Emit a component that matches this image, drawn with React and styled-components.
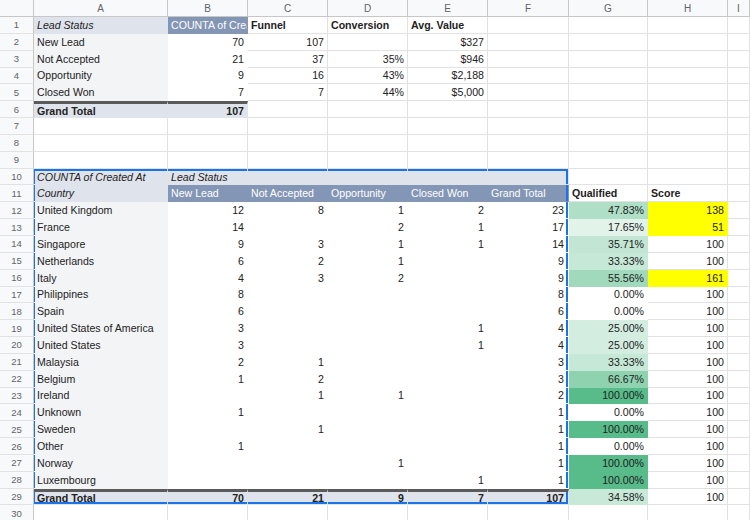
import React from 'react';
import styled, {createGlobalStyle} from 'styled-components';

const Global = createGlobalStyle`
  body { margin: 0; background: #fff; font-family: "Liberation Sans", Arial, sans-serif; }
`;

const COLS = [34, 134, 80, 80, 80, 80, 81, 79, 80, 22];
const ROW_H = 16.85;

const Sheet = styled.div`
  display: grid;
  grid-template-columns: ${COLS.map(c => c + 'px').join(' ')};
  grid-template-rows: 17px;
  grid-auto-rows: ${ROW_H}px;
  width: 750px;
  height: 520px;
  overflow: hidden;
  font-size: 10.6px;
  color: #222;
`;

const ColHead = styled.div`
  background: #f8f9fa;
  border-right: 1px solid #c7c7c7;
  border-bottom: 1px solid #c7c7c7;
  color: #5f6368;
  font-size: 10px;
  display: flex;
  align-items: center;
  justify-content: center;
`;

const RowHead = styled.div`
  background: #f8f9fa;
  border-right: 1px solid #c7c7c7;
  border-bottom: 1px solid #e2e2e2;
  color: #5f6368;
  font-size: 9.5px;
  display: flex;
  align-items: center;
  justify-content: center;
`;

const Cell = styled.div`
  position: relative;
  background: ${p => p.$bg || '#fff'};
  color: ${p => p.$color || '#222'};
  font-weight: ${p => (p.$bold ? 700 : 400)};
  font-style: ${p => (p.$italic ? 'italic' : 'normal')};
  display: flex;
  align-items: center;
  justify-content: ${p => (p.$right ? 'flex-end' : 'flex-start')};
  padding: 0 ${p => (p.$edge ? 4 : 3)}px 0 3px;
  white-space: nowrap;
  overflow: ${p => (p.$clip ? 'hidden' : 'visible')};
  border-right: 1px solid ${p => (p.$grid ? '#e2e2e2' : 'transparent')};
  border-bottom: 1px solid ${p => (p.$grid ? '#e2e2e2' : 'transparent')};
  border-top: ${p => (p.$thick ? '3px solid #5a5a5a' : 'none')};
  box-shadow: ${p => p.$sel || 'none'};
  z-index: ${p => (p.$clip ? 2 : 1)};
`;

const LIGHT = '#dfe3eb';
const DARK = '#8496b5';
const SIDE = '#f3f4f6';
const Y = '#ffff00';

const countries = [
  ['United Kingdom', 12, 8, 1, 2, 23, '47.83%', '#afdfc6', 138, Y],
  ['France', 14, '', 2, 1, 17, '17.65%', '#e2f3ea', 51, Y],
  ['Singapore', 9, 3, 1, 1, 14, '35.71%', '#c2e6d3', 100],
  ['Netherlands', 6, 2, 1, '', 9, '33.33%', '#c6e8d6', 100],
  ['Italy', 4, 3, 2, '', 9, '55.56%', '#a1d9bc', 161, Y],
  ['Philippines', 8, '', '', '', 8, '0.00%', '#fff', 100],
  ['Spain', 6, '', '', '', 6, '0.00%', '#fff', 100],
  ['United States of America', 3, '', '', 1, 4, '25.00%', '#d3eee0', 100],
  ['United States', 3, '', '', 1, 4, '25.00%', '#d3eee0', 100],
  ['Malaysia', 2, 1, '', '', 3, '33.33%', '#c6e8d6', 100],
  ['Belgium', 1, 2, '', '', 3, '66.67%', '#8fd2af', 100],
  ['Ireland', '', 1, 1, '', 2, '100.00%', '#57bb8a', 100],
  ['Unknown', 1, '', '', '', 1, '0.00%', '#fff', 100],
  ['Sweden', '', 1, '', '', 1, '100.00%', '#57bb8a', 100],
  ['Other', 1, '', '', '', 1, '0.00%', '#fff', 100],
  ['Norway', '', '', 1, '', 1, '100.00%', '#57bb8a', 100],
  ['Luxembourg', '', '', '', 1, 1, '100.00%', '#57bb8a', 100],
];

function buildRows() {
  const rows = [];
  for (let i = 0; i < 30; i++) rows.push(Array.from({length: 9}, () => ({grid: true})));
  const set = (r, c, v) => { rows[r - 1][c] = {...v}; };
  const pv = (o) => ({grid: false, ...o});

  // top pivot
  set(1, 0, pv({t: 'Lead Status', italic: true, bg: LIGHT}));
  set(1, 1, pv({t: 'COUNTA of Created At', bg: DARK, color: '#fff', clip: true}));
  set(1, 2, {t: 'Funnel', bold: true, grid: true});
  set(1, 3, {t: 'Conversion', bold: true, grid: true});
  set(1, 4, {t: 'Avg. Value', bold: true, grid: true});
  const top = [
    ['New Lead', 70, 107, '', '$327'],
    ['Not Accepted', 21, 37, '35%', '$946'],
    ['Opportunity', 9, 16, '43%', '$2,188'],
    ['Closed Won', 7, 7, '44%', '$5,000'],
  ];
  top.forEach((r, i) => {
    set(i + 2, 0, pv({t: r[0], bg: SIDE}));
    set(i + 2, 1, pv({t: r[1], right: true}));
    set(i + 2, 2, {t: r[2], right: true, grid: true});
    set(i + 2, 3, {t: r[3], right: true, grid: true});
    set(i + 2, 4, {t: r[4], right: true, grid: true});
  });
  set(6, 0, pv({t: 'Grand Total', bold: true, bg: LIGHT, thick: true}));
  set(6, 1, pv({t: 107, bold: true, bg: LIGHT, thick: true, right: true}));

  // big pivot
  const heads = ['New Lead', 'Not Accepted', 'Opportunity', 'Closed Won', 'Grand Total'];
  set(10, 0, pv({t: 'COUNTA of Created At', italic: true, bg: LIGHT}));
  set(10, 1, pv({t: 'Lead Status', italic: true, bg: LIGHT}));
  for (let c = 2; c <= 5; c++) set(10, c, pv({bg: LIGHT}));
  set(11, 0, pv({t: 'Country', italic: true, bg: LIGHT}));
  heads.forEach((h, i) => set(11, i + 1, pv({t: h, bg: DARK, color: '#fff'})));
  set(11, 6, {t: 'Qualified', bold: true, grid: true});
  set(11, 7, {t: 'Score', bold: true, grid: true});

  countries.forEach((r, i) => {
    const row = i + 12;
    set(row, 0, pv({t: r[0], bg: SIDE}));
    for (let c = 1; c <= 5; c++) set(row, c, pv({t: r[c], right: true}));
    set(row, 6, {t: r[6], right: true, bg: r[7]});
    set(row, 7, {t: r[8], right: true, bg: r[9], grid: !r[9]});
  });
  set(29, 0, pv({t: 'Grand Total', bold: true, bg: LIGHT, thick: true}));
  [70, 21, 9, 7, 107].forEach((v, i) => set(29, i + 1, pv({t: v, bold: true, bg: LIGHT, thick: true, right: true})));
  set(29, 6, {t: '34.58%', right: true, bg: '#c9e9d8'});
  set(29, 7, {t: 100, right: true, grid: true});

  // selection border A10:F29
  for (let r = 10; r <= 29; r++) {
    for (let c = 0; c <= 5; c++) {
      const s = [];
      if (r === 10) s.push('inset 0 2px 0 #1a73e8');
      if (r === 29) s.push('inset 0 -2px 0 #1a73e8');
      if (c === 0) s.push('inset 1px 0 0 #1a73e8');
      if (c === 5) { s.push('inset -2px 0 0 #1a73e8'); rows[r - 1][c].edge = true; }
      if (s.length) rows[r - 1][c].sel = s.join(', ');
    }
  }
  return rows;
}

const LETTERS = ['A', 'B', 'C', 'D', 'E', 'F', 'G', 'H', 'I'];

export default function App() {
  const rows = buildRows();
  return (
    <>
      <Global />
      <Sheet>
        <ColHead />
        {LETTERS.map(l => <ColHead key={l}>{l}</ColHead>)}
        {rows.map((row, r) => (
          <React.Fragment key={r}>
            <RowHead>{r + 1}</RowHead>
            {row.map((c, i) => (
              <Cell
                key={i}
                $bg={c.bg}
                $color={c.color}
                $bold={c.bold}
                $italic={c.italic}
                $right={c.right}
                $grid={c.grid}
                $thick={c.thick}
                $sel={c.sel}
                $clip={c.clip}
                $edge={c.edge}
              >
                {c.t}
              </Cell>
            ))}
          </React.Fragment>
        ))}
      </Sheet>
    </>
  );
}
